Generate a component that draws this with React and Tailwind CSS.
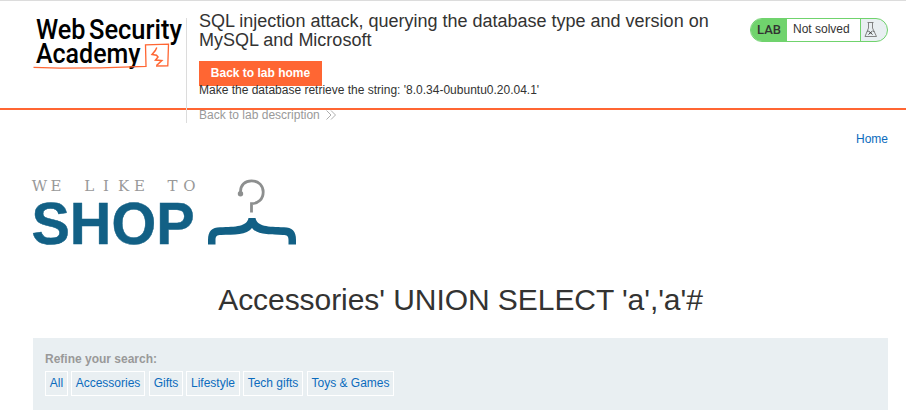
function AcademyLogo() {
  return (
    <svg width="153" height="58" viewBox="33 14 153 58" className="mt-[13px] ml-[33px] block shrink-0 overflow-visible">
      <g fontFamily="Roboto, sans-serif" fontWeight="500" fontSize="27.500" fill="#000">
        <text x="36" y="38.700" textLength="49.500" lengthAdjust="spacingAndGlyphs">Web</text>
        <text x="89" y="38.700" textLength="93" lengthAdjust="spacingAndGlyphs">Security</text>
        <text x="36" y="63" textLength="104.500" lengthAdjust="spacingAndGlyphs">Academy</text>
      </g>
      <path d="M33.500 67.300L60 68.200L100 67.800L146 66.400L145.500 44.800L168.500 44.200L167.800 65.800L156 66" fill="none" stroke="#ff6633" strokeWidth="1.300" />
      <path d="M156.800 47.500L155.300 50.500L152 54.500L156.500 55.300L158 57L155.500 60L161.800 60.500L156.500 65.500" fill="none" stroke="#ff6633" strokeWidth="1.500" />
    </svg>
  );
}

function ShopLogo() {
  return (
    <svg width="270" height="72" viewBox="30 176 270 72" className="-ml-[3px] block overflow-visible">
      <text x="39.500 56 72 89.300 106 123.500 139.500 156 172.500 189.500" y="191" fontFamily="'DejaVu Serif', serif" fontSize="15" textAnchor="middle" fill="#999999">WE LIKE TO</text>
      <text x="31.500" y="244" fontFamily="'Liberation Sans', sans-serif" fontWeight="700" fontSize="59.500" fill="#126085" stroke="#126085" strokeWidth="0.5" textLength="163" lengthAdjust="spacingAndGlyphs">SHOP</text>
      <path d="M240.500 193C240 184.500 245.500 180.800 251.500 180.800C259 180.800 263.200 186 263.200 192C263.200 199.500 258 203.500 251.500 203.700V212.500" fill="none" stroke="#8d8f8f" strokeWidth="2.800" />
      <circle cx="240.500" cy="193.800" r="2.700" fill="#8d8f8f" />
      <path d="M208 244.500V240C208 231 212 227.500 220 227.300C236 226.800 247 226.500 248.500 218H255.500C257 226.500 268 226.800 284 227.300C292 227.500 296 231 296 240V244.500H288.500V240C288.500 236 287 235 283 235C270 234.500 257 235 252 228C247 235 234 234.500 221 235C217 235 215.500 236 215.500 240V244.500Z" fill="#126085" />
    </svg>
  );
}

const filters = [
  ["All", "w-[23px] mr-[3px]"],
  ["Accessories", "w-[74px] mr-[4px]"],
  ["Gifts", "w-[34px] mr-[3px]"],
  ["Lifestyle", "w-[54px] mr-[3px]"],
  ["Tech gifts", "w-[60px] mr-[4px]"],
  ["Toys & Games", "w-[87px]"],
];

export default function App() {
  return (
    <div className="h-[416px] overflow-hidden bg-white font-['Liberation_Sans',Arial,sans-serif] text-xs text-[#333332]">
      <header className="flex h-[110px] items-start border-t border-b-2 border-t-[#dcdcdc] border-b-[#ff6633]">
        <AcademyLogo />
        <div className="relative mt-[17px] h-[105px] w-[560px] shrink-0 border-l border-[#dcdcdc] pl-3">
          <h2 className="-mt-[6px] text-[18px] leading-[19px] whitespace-nowrap">
            SQL injection attack, querying the database type and version on<br />MySQL and Microsoft
          </h2>
          <a className="mt-[11px] flex h-[25px] w-[123px] items-center justify-center bg-[#ff6633] pb-[2px] font-bold whitespace-nowrap text-white">Back to lab home</a>
          <p className="-mt-[3px] h-[14px] leading-[14px] whitespace-nowrap">Make the database retrieve the string: '8.0.34-0ubuntu0.20.04.1'</p>
          <a className="mt-[11px] flex h-[14px] items-center whitespace-nowrap text-[#999999]">
            Back to lab description
            <svg width="10" height="10" viewBox="0 0 10 10" className="ml-[6px]" fill="none" stroke="#999999" strokeWidth="0.8"><path d="M0.500 0.500L5 5L0.500 9.500M5 0.500L9.500 5L5 9.500" /></svg>
          </a>
        </div>
        <div className="mt-[17px] mr-[18px] ml-auto flex h-6 w-[138px] shrink-0 overflow-hidden rounded-full border border-[#70d36d] bg-[#e9eff2]">
          <div className="flex w-9 items-center justify-center bg-[#70d36d] font-[Roboto] text-[13px] font-medium">LAB</div>
          <div className="w-[74px] border-r border-[#70d36d] bg-white pl-[6px] leading-[21px] whitespace-nowrap">Not solved</div>
          <svg width="14" height="17" viewBox="0 0 14 17" className="mt-[2px] ml-[3px]" fill="none" stroke="#777777" strokeWidth="0.9">
            <path d="M3.500 1.500H9.500M4.500 1.500V7L1 15.500H12.500L8.500 7V1.500M3 10.500H4.500M9 10.500H10.500" />
            <path d="M4.500 10L8.500 13.500M8.500 10L4.500 13.500" stroke="#333333" />
          </svg>
        </div>
      </header>
      <main className="pr-[18px] pl-[33px]">
        <nav className="flex h-[66px] justify-end pt-[22px] leading-[14px] text-[#0b6bbd]">Home</nav>
        <ShopLogo />
        <h1 className="mt-[34px] h-[56px] text-center text-[30px] leading-[36px] tracking-[-0.06px] whitespace-nowrap">Accessories' UNION SELECT 'a','a'#</h1>
        <section className="h-[72px] bg-[#e9eff2] pt-[14px] pl-3">
          <p className="h-[19px] leading-[14px] font-bold text-[#999999]">Refine your search:</p>
          <div className="flex">
            {filters.map(([label, size]) => (
              <a key={label} className={`flex h-[25px] shrink-0 items-center justify-center border border-white pb-[2px] whitespace-nowrap text-[#0b6bbd] ${size}`}>{label}</a>
            ))}
          </div>
        </section>
      </main>
    </div>
  );
}
